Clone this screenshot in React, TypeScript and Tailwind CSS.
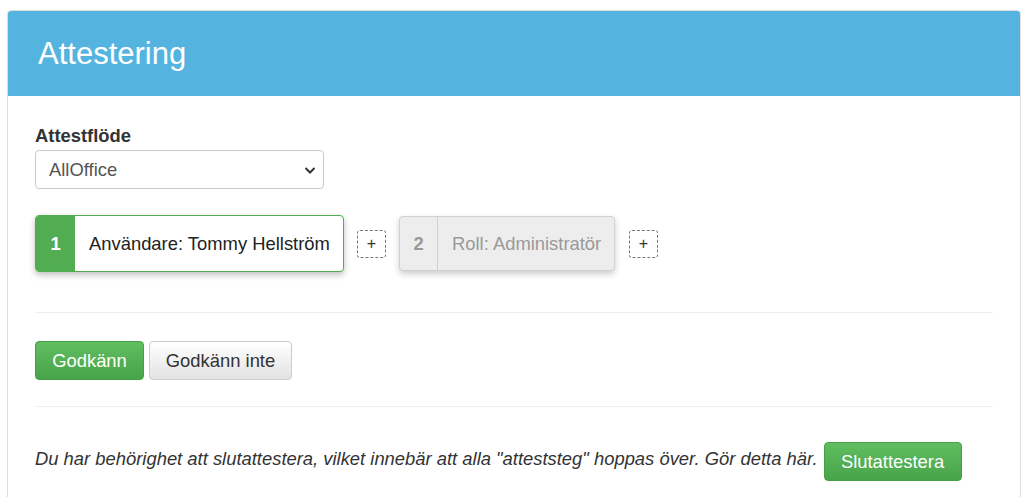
import React from 'react';

const font = { fontFamily: '"Liberation Sans", Arial, sans-serif' };

const PlusBox = () => (
  <button className="w-[29px] h-[28px] flex items-center justify-center border border-dashed border-[#777] rounded-[3px] text-[#333] text-[16px] leading-none bg-white">
    +
  </button>
);

export default function App() {
  return (
    <div className="w-[1024px] h-[497px] bg-white overflow-hidden pt-[10px] pl-[7px] pr-[3px]" style={font}>
      <div className="border border-[#dddddd] rounded-t-[4px] h-[500px]">
        <div className="bg-[#54b4df] h-[85px] flex items-center pl-[30px] rounded-t-[3px]">
          <h1 className="text-white text-[31px] leading-none">Attestering</h1>
        </div>
        <div className="px-[27px] pt-[30px]">
          <label className="block text-[18.4px] font-bold text-[#333] leading-[20px] mb-[4px]">
            Attestflöde
          </label>
          <div className="relative w-[289px] h-[39px] border border-[#cccccc] rounded-[4px] flex items-center pl-[13px] text-[18.4px] text-[#555]">
            AllOffice
            <svg className="absolute right-[7px] top-[15px]" width="12" height="9" viewBox="0 0 12 9">
              <path d="M1.5 2 L6 6.5 L10.5 2" fill="none" stroke="#333" strokeWidth="2" />
            </svg>
          </div>

          <div className="flex items-center mt-[26px] h-[57px]">
            <div className="flex h-[57px] w-[309px] border border-[#4cae4c] rounded-[4px] overflow-hidden shadow-[0_3px_6px_rgba(0,0,0,0.25)] bg-white">
              <div className="w-[39px] bg-[#52ad52] text-white font-bold text-[18.4px] flex items-center justify-center">1</div>
              <div className="flex items-center pl-[14px] text-[18.4px] text-[#222] whitespace-nowrap">Användare: Tommy Hellström</div>
            </div>
            <div className="ml-[13px]">
              <PlusBox />
            </div>
            <div className="ml-[13px] flex h-[55px] w-[216px] border border-[#d0d0d0] rounded-[4px] overflow-hidden shadow-[0_3px_6px_rgba(0,0,0,0.2)] bg-[#ededed]">
              <div className="w-[38px] border-r border-[#d0d0d0] text-[#999] font-bold text-[18.4px] flex items-center justify-center">2</div>
              <div className="flex items-center pl-[14px] text-[18.4px] text-[#999] whitespace-nowrap">Roll: Administratör</div>
            </div>
            <div className="ml-[14px]">
              <PlusBox />
            </div>
          </div>

          <hr className="mt-[40px] border-t border-[#eeeeee]" />

          <div className="flex gap-[5px] mt-[28px]">
            <button className="h-[39px] w-[109px] rounded-[4px] border border-[#43a043] text-white text-[18.4px] bg-gradient-to-b from-[#60bd60] to-[#48a448]">
              Godkänn
            </button>
            <button className="h-[39px] w-[143px] rounded-[4px] border border-[#cccccc] text-[#333] text-[18.4px] bg-gradient-to-b from-white to-[#e3e3e3]">
              Godkänn inte
            </button>
          </div>

          <hr className="mt-[26px] border-t border-[#eeeeee]" />

          <div className="flex items-start mt-[35px]">
            <p className="italic text-[18.4px] text-[#333] mt-[3px] whitespace-nowrap">
              Du har behörighet att slutattestera, vilket innebär att alla "atteststeg" hoppas över. Gör detta här.
            </p>
            <button className="ml-[6px] h-[39px] w-[138px] shrink-0 rounded-[4px] border border-[#43a043] text-white text-[18.4px] bg-gradient-to-b from-[#60bd60] to-[#48a448]">
              Slutattestera
            </button>
          </div>
        </div>
      </div>
    </div>
  );
}
